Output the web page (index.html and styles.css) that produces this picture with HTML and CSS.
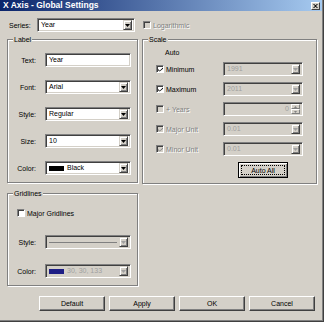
FILE: index.html
```html
<!DOCTYPE html>
<html>
<head>
<meta charset="utf-8">
<link rel="stylesheet" href="styles.css">
</head>
<body>
<div class="window">
  <div class="frame">
    <div class="titlebar">
      <span class="title">X Axis - Global Settings</span>
      <span class="close"><svg width="5" height="4" viewBox="0 0 5 4"><path d="M0 0h1l1.5 1.2L4 0h1L3 2l2 2H4L2.5 2.8 1 4H0l2-2z" fill="#000"/></svg></span>
    </div>
    <div class="body">
      <div class="series-row">
        <span class="lbl">Series:</span>
        <div class="combo series-combo"><span class="val">Year</span><span class="drop"><svg width="5" height="3" viewBox="0 0 5 3"><path d="M0 0h5L2.5 3z" fill="#000"/></svg></span></div>
        <span class="check disabled"></span>
        <span class="dis-text log">Logarithmic</span>
      </div>
      <div class="groups">
        <div class="left-col">
          <div class="group label-group">
            <span class="legend">Label</span>
            <div class="form-grid">
              <span class="flbl">Text:</span>
              <div class="textbox"><span class="val">Year</span></div>
              <span class="flbl">Font:</span>
              <div class="combo"><span class="val">Arial</span><span class="drop"><svg width="5" height="3" viewBox="0 0 5 3"><path d="M0 0h5L2.5 3z" fill="#000"/></svg></span></div>
              <span class="flbl">Style:</span>
              <div class="combo"><span class="val">Regular</span><span class="drop"><svg width="5" height="3" viewBox="0 0 5 3"><path d="M0 0h5L2.5 3z" fill="#000"/></svg></span></div>
              <span class="flbl">Size:</span>
              <div class="combo"><span class="val">10</span><span class="drop"><svg width="5" height="3" viewBox="0 0 5 3"><path d="M0 0h5L2.5 3z" fill="#000"/></svg></span></div>
              <span class="flbl">Color:</span>
              <div class="combo"><span class="swatch black"></span><span class="val">Black</span><span class="drop"><svg width="5" height="3" viewBox="0 0 5 3"><path d="M0 0h5L2.5 3z" fill="#000"/></svg></span></div>
            </div>
          </div>
          <div class="group grid-group">
            <span class="legend">Gridlines</span>
            <div class="check-row">
              <span class="check"></span>
              <span class="ctext">Major Gridlines</span>
            </div>
            <div class="form-grid grid-form">
              <span class="flbl">Style:</span>
              <div class="combo disabled"><span class="line"></span><span class="drop"><svg width="5" height="3" viewBox="0 0 5 3"><path d="M0 0h5L2.5 3z" fill="#a0a0a0"/></svg></span></div>
              <span class="flbl">Color:</span>
              <div class="combo disabled"><span class="swatch navy"></span><span class="val dis">30, 30, 133</span><span class="drop"><svg width="5" height="3" viewBox="0 0 5 3"><path d="M0 0h5L2.5 3z" fill="#a0a0a0"/></svg></span></div>
            </div>
          </div>
        </div>
        <div class="group scale-group">
          <span class="legend">Scale</span>
          <div class="auto-head">Auto</div>
          <div class="scale-grid">
            <div class="srow"><span class="check checked"><svg width="6" height="5" viewBox="0 0 6 5"><path d="M0 2l2 2 4-4v1.5L2 5 0 3.5z" fill="#000"/></svg></span><span class="ctext">Minimum</span></div>
            <div class="combo disabled"><span class="val dis">1991</span><span class="drop"><svg width="5" height="3" viewBox="0 0 5 3"><path d="M0 0h5L2.5 3z" fill="#a0a0a0"/></svg></span></div>
            <div class="srow"><span class="check checked"><svg width="6" height="5" viewBox="0 0 6 5"><path d="M0 2l2 2 4-4v1.5L2 5 0 3.5z" fill="#000"/></svg></span><span class="ctext">Maximum</span></div>
            <div class="combo disabled"><span class="val dis">2011</span><span class="drop"><svg width="5" height="3" viewBox="0 0 5 3"><path d="M0 0h5L2.5 3z" fill="#a0a0a0"/></svg></span></div>
            <div class="srow"><span class="check disabled"></span><span class="dis-text">+ Years</span></div>
            <div class="combo disabled spin"><span class="val dis right">0</span><span class="spinbtns"><span class="sb"><svg width="3" height="2" viewBox="0 0 3 2"><path d="M0 2h3L1.5 0z" fill="#808080"/></svg></span><span class="sb"><svg width="3" height="2" viewBox="0 0 3 2"><path d="M0 0h3L1.5 2z" fill="#808080"/></svg></span></span></div>
            <div class="srow"><span class="check disabled checked"><svg width="6" height="5" viewBox="0 0 6 5"><path d="M0 2l2 2 4-4v1.5L2 5 0 3.5z" fill="#808080"/></svg></span><span class="dis-text">Major Unit</span></div>
            <div class="combo disabled"><span class="val dis">0.01</span><span class="drop"><svg width="5" height="3" viewBox="0 0 5 3"><path d="M0 0h5L2.5 3z" fill="#a0a0a0"/></svg></span></div>
            <div class="srow"><span class="check disabled checked"><svg width="6" height="5" viewBox="0 0 6 5"><path d="M0 2l2 2 4-4v1.5L2 5 0 3.5z" fill="#808080"/></svg></span><span class="dis-text">Minor Unit</span></div>
            <div class="combo disabled"><span class="val dis">0.01</span><span class="drop"><svg width="5" height="3" viewBox="0 0 5 3"><path d="M0 0h5L2.5 3z" fill="#a0a0a0"/></svg></span></div>
            <span></span>
            <div class="autoall-wrap"><button class="btn autoall"><span class="focus">Auto All</span></button></div>
          </div>
        </div>
      </div>
      <div class="buttons">
        <button class="btn">Default</button>
        <button class="btn">Apply</button>
        <button class="btn">OK</button>
        <button class="btn">Cancel</button>
      </div>
    </div>
  </div>
</div>
</body>
</html>
```
FILE: styles.css
```css
* { box-sizing: border-box; }
html, body {
  margin: 0;
  padding: 0;
  width: 324px;
  height: 322px;
  overflow: hidden;
  background: #d4d0c8;
  font-family: "Liberation Sans", Arial, sans-serif;
  font-size: 7px;
  color: #000;
}
.window {
  width: 324px;
  height: 322px;
  border-right: 1px solid #404040;
  border-bottom: 1px solid #404040;
}
.frame {
  width: 323px;
  height: 321px;
  border-right: 1px solid #808080;
  border-bottom: 1px solid #808080;
  display: flex;
  flex-direction: column;
}
.titlebar {
  height: 11px;
  background: linear-gradient(to right, #0a246a, #a6caf0);
  display: flex;
  align-items: center;
  justify-content: space-between;
  padding: 0 2px 0 3px;
}
.title {
  color: #fff;
  font-weight: bold;
  font-size: 8.5px;
  line-height: 11px;
}
.close {
  width: 9px;
  height: 8px;
  background: #d4d0c8;
  border: 1px solid;
  border-color: #fff #404040 #404040 #fff;
  display: flex;
  align-items: center;
  justify-content: center;
}
.body {
  flex: 1;
  display: flex;
  flex-direction: column;
}
.series-row {
  display: flex;
  align-items: center;
  margin-top: 7px;
  padding-left: 9px;
  height: 14px;
}
.lbl { width: 28px; }
.series-combo { width: 98px; }
.series-row .check { margin-left: 8px; }
.log { margin-left: 2px; }

.combo, .textbox {
  height: 14px;
  display: flex;
  align-items: center;
  background: #fff;
  border: 1px solid;
  border-color: #808080 #fff #fff #808080;
  box-shadow: inset 1px 1px 0 #404040, inset -1px -1px 0 #d4d0c8;
  padding: 2px 2px 2px 3px;
  overflow: hidden;
}
.combo.disabled { background: #d4d0c8; }
.val { flex: 1; white-space: nowrap; line-height: 10px; }
.val.dis { color: #a0a0a0; }
.val.right { text-align: right; padding-right: 2px; }
.drop {
  width: 9px;
  height: 10px;
  background: #d4d0c8;
  border: 1px solid;
  border-color: #d4d0c8 #404040 #404040 #d4d0c8;
  box-shadow: inset 1px 1px 0 #fff, inset -1px -1px 0 #808080;
  display: flex;
  align-items: center;
  justify-content: center;
}
.spinbtns {
  width: 9px;
  height: 10px;
  display: flex;
  flex-direction: column;
}
.sb {
  flex: 1;
  background: #d4d0c8;
  border: 1px solid;
  border-color: #fff #808080 #808080 #fff;
  display: flex;
  align-items: center;
  justify-content: center;
}
.swatch {
  width: 15px;
  height: 5px;
  margin-right: 3px;
}
.swatch.black { background: #000; }
.swatch.navy { background: rgb(30, 30, 133); }
.line {
  flex: 1;
  height: 1px;
  background: #808080;
  margin-right: 2px;
}

.check {
  width: 8px;
  height: 8px;
  background: #fff;
  border: 1px solid;
  border-color: #808080 #fff #fff #808080;
  box-shadow: inset 1px 1px 0 #404040;
  display: inline-flex;
  align-items: center;
  justify-content: center;
  flex: none;
}
.check.disabled { background: #d4d0c8; }
.check svg { margin: 1px 0 0 1px; }
.dis-text { color: #808080; text-shadow: 1px 1px 0 #fff; white-space: nowrap; }
.ctext { white-space: nowrap; }

.groups {
  display: flex;
  margin-top: 7px;
  padding-left: 7px;
  gap: 4px;
}
.left-col {
  display: flex;
  flex-direction: column;
  gap: 10px;
}
.group {
  position: relative;
  border: 1px solid #808080;
  box-shadow: 1px 1px 0 #fff, inset 1px 1px 0 #fff;
}
.legend {
  position: absolute;
  top: -5px;
  left: 5px;
  padding: 0 1px;
  background: #d4d0c8;
  line-height: 9px;
}
.label-group {
  width: 131px;
  height: 144px;
  padding-top: 13px;
}
.form-grid {
  display: grid;
  grid-template-columns: 28px 86px;
  column-gap: 9px;
  row-gap: 13px;
  align-items: center;
}
.flbl { text-align: right; }
.grid-group {
  width: 131px;
  height: 93px;
  padding-top: 12px;
}
.check-row {
  display: flex;
  align-items: center;
  height: 14px;
  padding-left: 9px;
  gap: 2px;
}
.grid-form {
  margin-top: 15px;
  row-gap: 15px;
}
.scale-group {
  width: 175px;
  height: 145px;
  padding: 8px 13px 0 13px;
}
.auto-head {
  height: 10px;
  line-height: 10px;
  padding-left: 9px;
  margin-bottom: 4px;
}
.scale-grid {
  display: grid;
  grid-template-columns: 1fr 80px;
  row-gap: 6px;
  align-items: center;
}
.srow {
  display: flex;
  align-items: center;
  gap: 2px;
}
.autoall-wrap { display: flex; justify-content: center; }

.btn {
  font: inherit;
  color: #000;
  height: 15px;
  background: #d4d0c8;
  border: 1px solid;
  border-color: #fff #404040 #404040 #fff;
  box-shadow: inset -1px -1px 0 #808080;
  padding: 0;
  display: flex;
  align-items: center;
  justify-content: center;
}
.autoall {
  width: 50px;
  height: 16px;
  border: 1px solid #000;
  box-shadow: inset 1px 1px 0 #fff, inset -1px -1px 0 #808080;
  padding: 2px;
}
.focus {
  flex: 1;
  align-self: stretch;
  border: 1px dotted #000;
  display: flex;
  align-items: center;
  justify-content: center;
}
.buttons {
  display: flex;
  gap: 4px;
  margin-top: 10px;
  padding-left: 39px;
}
.buttons .btn { width: 66px; }
```
